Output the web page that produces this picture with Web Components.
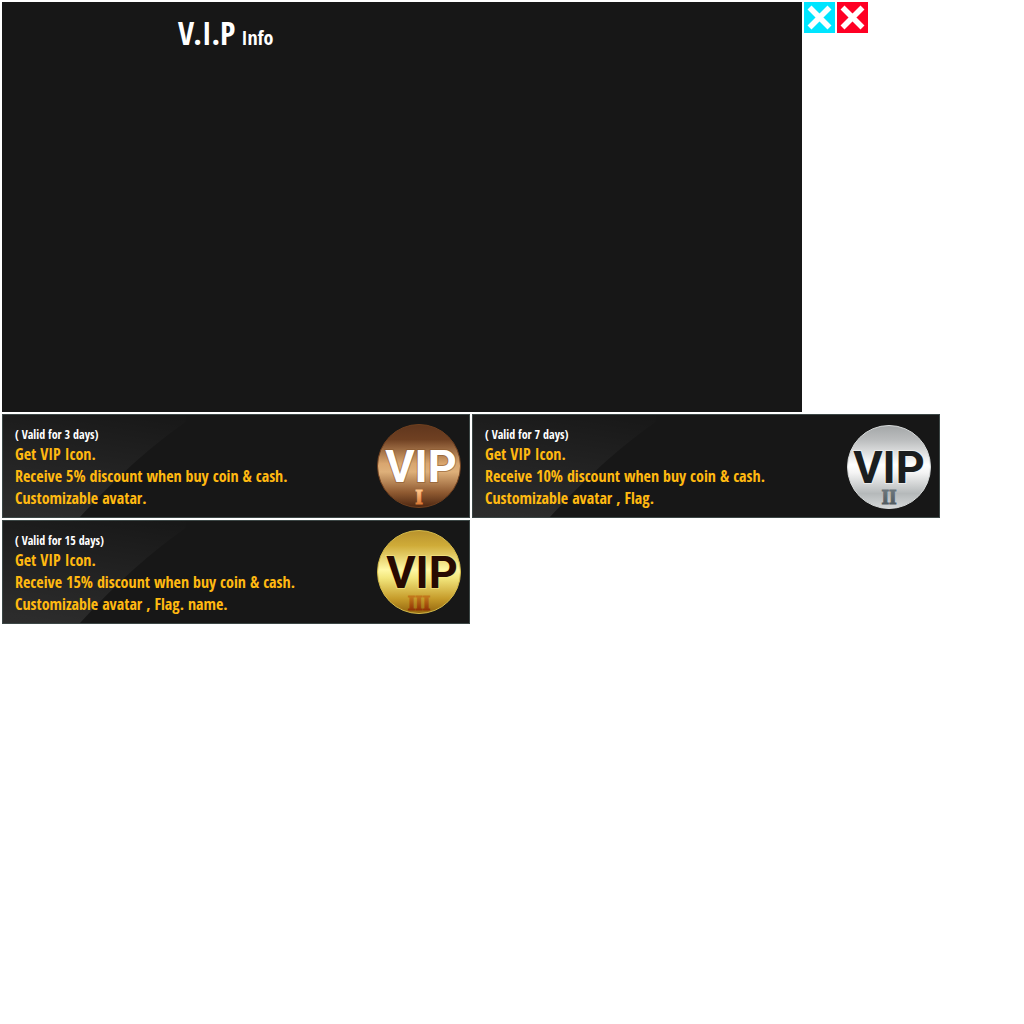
<!DOCTYPE html>
<html lang="en">
<head>
<meta charset="utf-8">
<title>V.I.P Info</title>
<style>
body { margin: 0; background: #fff; font-family: "Open Sans Condensed", "Open Sans", sans-serif; font-weight: 700; }
</style>
</head>
<body>
<vip-page></vip-page>

<template id="page-t">
<style>
:host { display: flex; flex-direction: column; gap: 2px; padding: 2px; }
.top, .cards { display: flex; gap: 2px; align-items: flex-start; }
.cards { flex-wrap: wrap; }
vip-panel { flex: 0 1 800px; }
vip-card { flex: 0 1 468px; }
</style>
<div class="top">
  <vip-panel>V.I.P<span slot="sub">Info</span></vip-panel>
  <close-button tone="#00e5ff" label="Close, highlighted"></close-button>
  <close-button tone="#ff0024" label="Close"></close-button>
</div>
<div class="cards">
  <vip-card tier="I"><span slot="term">( Valid for 3 days)</span><div>Get VIP Icon.</div><div>Receive 5% discount when buy coin &amp; cash.</div><div>Customizable avatar.</div></vip-card>
  <vip-card tier="II"><span slot="term">( Valid for 7 days)</span><div>Get VIP Icon.</div><div>Receive 10% discount when buy coin &amp; cash.</div><div>Customizable avatar , Flag.</div></vip-card>
  <vip-card tier="III"><span slot="term">( Valid for 15 days)</span><div>Get VIP Icon.</div><div>Receive 15% discount when buy coin &amp; cash.</div><div>Customizable avatar , Flag. name.</div></vip-card>
</div>
</template>

<template id="panel-t">
<style>
:host { display: block; box-sizing: border-box; min-height: 410px; padding-top: 11px; background: #171717; color: #fff; }
h1 { margin: 0; padding-left: 22%; display: flex; align-items: baseline; gap: 6px; font-size: 32px; line-height: 40px; white-space: nowrap; }
small { font-size: 20px; }
</style>
<h1><span><slot></slot></span><small><slot name="sub"></slot></small></h1>
</template>

<template id="close-t">
<style>
:host { display: block; }
button { display: block; width: 31px; height: 31px; padding: 0; border: 0; cursor: pointer; background: var(--tone); }
svg { display: block; }
</style>
<button type="button"><svg width="31" height="31" viewBox="0 0 31 31" aria-hidden="true"><path d="M7.5 7.5L23.5 23.5M23.5 7.5L7.5 23.5" stroke="#fff" stroke-width="5.6" stroke-linecap="square"/></svg></button>
</template>

<template id="card-t">
<style>
:host { display: flex; box-sizing: border-box; min-height: 104px; padding: 8px 7px 0 12px; justify-content: space-between; border: 1px solid #3c4746; color: #ffb911; background: #171717; position: relative; }
.sheen { position: absolute; inset: 0 auto 0 0; width: 183px; height: 100%; }
.text { position: relative; font-size: 16px; line-height: 22px; white-space: nowrap; }
.term { color: #fff; font-size: 12px; line-height: 24px; }
.lines { margin-top: -4px; }
vip-badge { position: relative; }
</style>
<svg class="sheen" viewBox="0 0 183 102" preserveAspectRatio="none" aria-hidden="true">
<defs><linearGradient id="s" gradientUnits="userSpaceOnUse" x1="80" y1="-20" x2="60" y2="102"><stop offset="0" stop-color="#fff" stop-opacity="0"/><stop offset="1" stop-color="#fff" stop-opacity=".09"/></linearGradient></defs>
<path d="M0 0H193Q135 38 77 102H0Z" fill="url(#s)"/></svg>
<div class="text"><div class="term"><slot name="term"></slot></div><div class="lines"><slot></slot></div></div>
<vip-badge></vip-badge>
</template>

<script>
const fromTemplate = (el, id) => {
  const root = el.attachShadow({ mode: 'open' });
  root.append(document.getElementById(id).content.cloneNode(true));
  return root;
};
const TIERS = {
  I:   { disc: ['#60361d', '#6f4022', '#d9a66f', '#deb07a', '#8f5a31', '#4c2611'], rim: '#70401f', word: '#fff', halo: '#8b5a30', num: ['#ffc488', '#d8752f'], x: 45, dy: 0 },
  II:  { disc: ['#a3a6a7', '#bcbebf', '#ffffff', '#f4f4f4', '#b5b9ba', '#d5d8d9'], rim: '#d9dcdc', word: '#1b1e1f', halo: '#f6f6f6', num: ['#6a7479', '#515b60'], x: 43, dy: 1 },
  III: { disc: ['#b8922d', '#cfab38', '#fff8a5', '#f3e77d', '#c69c2b', '#93640d'], rim: '#d7bd4b', word: '#270a02', halo: '#f8e886', num: ['#c1761b', '#8d2d03'], x: 46, dy: 0 }
};
const OFFSETS = [0, .18, .47, .57, .82, 1];
customElements.define('vip-badge', class extends HTMLElement {
  connectedCallback() {
    const tier = this.getAttribute('tier'), t = TIERS[tier];
    this.attachShadow({ mode: 'open' }).innerHTML = `
<style>:host { display: block; } svg { display: block; }</style>
<svg width="86" height="86" viewBox="0 0 86 86" role="img" aria-label="VIP ${tier}">
<defs><linearGradient id="d" x2="0" y2="1">${t.disc.map((c, i) => `<stop offset="${OFFSETS[i]}" stop-color="${c}"/>`).join('')}</linearGradient>
<linearGradient id="n" x2="0" y2="1"><stop offset=".2" stop-color="${t.num[0]}"/><stop offset=".85" stop-color="${t.num[1]}"/></linearGradient></defs>
<circle cx="43" cy="${43 + t.dy}" r="41.5" fill="url(#d)" stroke="${t.rim}"/>
<g text-anchor="middle" font-weight="700">
<text x="${t.x}" y="${59 + t.dy}" font-family="Roboto, sans-serif" font-size="45" fill="${t.word}" stroke="${t.halo}" stroke-width="2" stroke-opacity=".6" paint-order="stroke">VIP</text>
<text x="43" y="81" font-family="DejaVu Serif Condensed, DejaVu Serif, serif" font-size="18" fill="url(#n)" stroke="url(#n)">${tier}</text>
</g></svg>`;
  }
});
customElements.define('close-button', class extends HTMLElement {
  connectedCallback() {
    const root = fromTemplate(this, 'close-t');
    this.style.setProperty('--tone', this.getAttribute('tone'));
    root.querySelector('button').setAttribute('aria-label', this.getAttribute('label'));
  }
});
customElements.define('vip-panel', class extends HTMLElement {
  connectedCallback() { fromTemplate(this, 'panel-t'); }
});
customElements.define('vip-card', class extends HTMLElement {
  connectedCallback() {
    const part = document.getElementById('card-t').content.cloneNode(true);
    part.querySelector('vip-badge').setAttribute('tier', this.getAttribute('tier'));
    this.attachShadow({ mode: 'open' }).append(part);
  }
});
customElements.define('vip-page', class extends HTMLElement {
  connectedCallback() { fromTemplate(this, 'page-t'); }
});
</script>
</body>
</html>
